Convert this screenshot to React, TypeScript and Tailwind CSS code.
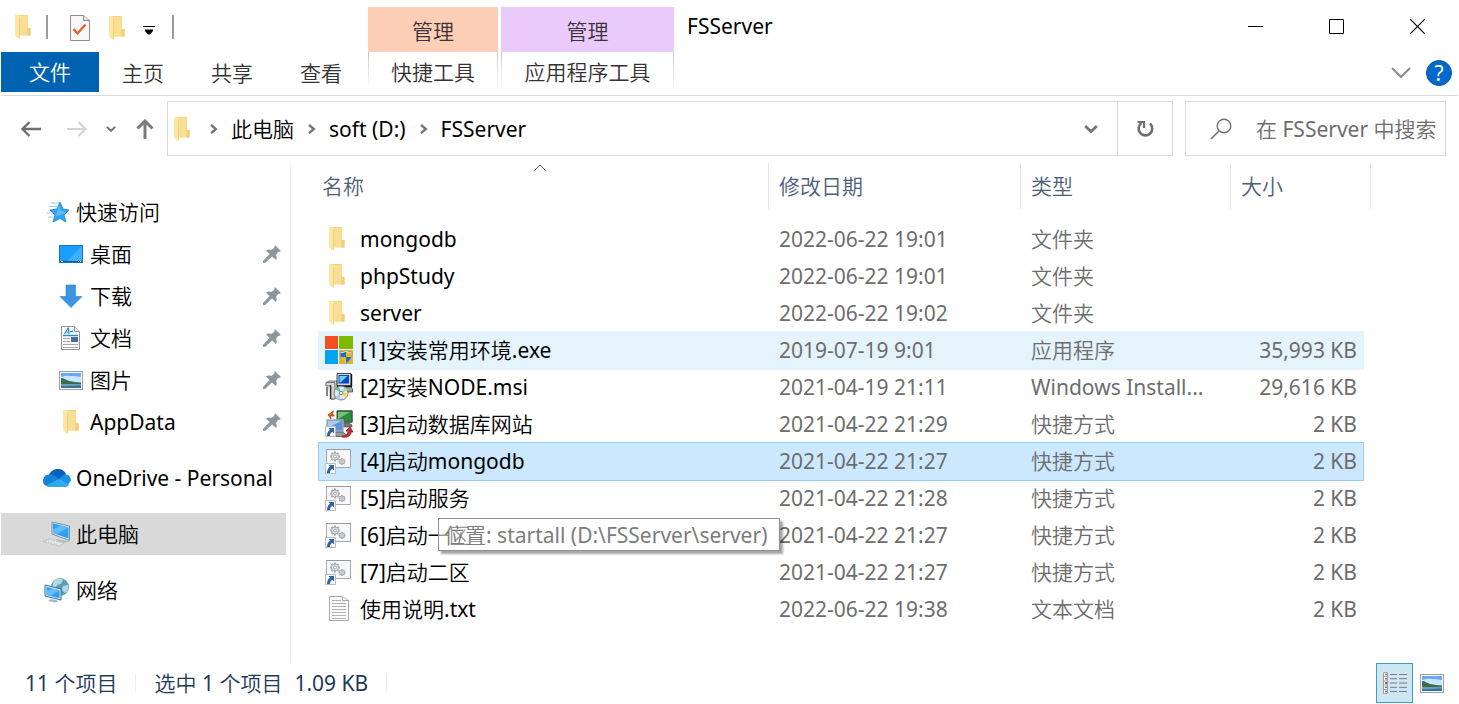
import React from "react";

type IconProps = { className?: string };

const FolderIcon = ({ className = "w-[18px] h-6" }: IconProps) => (
  <svg viewBox="0 0 18 24" className={className} aria-hidden="true">
    <path d="M1 0h13v13h2.500v7.500H6L1 18z" fill="#f6d680" />
    <path d="M5 1h8.500v19H5z" fill="#f9df94" />
    <path d="M13.500 13h3v7.500h-3z" fill="#f0cf76" />
    <path d="M1 0h3l2 2.500V23l-1 1-4-3.500z" fill="#fee7a2" />
    <path d="M5 3v20.500l1-.5V2.500z" fill="#f3d27a" />
  </svg>
);

const StarIcon = () => (
  <svg viewBox="0 0 24 22" className="w-6 h-[22px]" aria-hidden="true">
    <path
      d="m15 1 3 7 6 1-5 5 2 7-6-3.500L8 21l2-7-5-5 7-1z"
      fill="#33a3ee"
      stroke="#1b83d0"
      strokeWidth=".8"
    />
    <path d="m14 4 2 6 5 1-5 3-5 1z" fill="#5bbcf7" />
    <path d="M6 2h8M4 5.500h8M2 12h6M3 16h5" stroke="#8fcaf3" strokeWidth="1" />
  </svg>
);

const DesktopIcon = () => (
  <svg viewBox="0 0 24 18" className="w-6 h-[18px]" aria-hidden="true">
    <rect x=".5" y=".5" width="23" height="17" fill="#1a9dfb" stroke="#1478bd" />
    <path d="M23 1v15H8z" fill="#3cb0fd" />
    <path d="M1 16.500h22" stroke="#0c5c99" />
    <path d="M2 16.500h2M19 16.500h1M21 16.500h1" stroke="#fff" />
  </svg>
);

const DownloadIcon = () => (
  <svg viewBox="0 0 24 24" className="w-6 h-6" aria-hidden="true">
    <path d="M7 1h9.500v11.500H23L12 23.500 1 12.500h6z" fill="#3c96e4" stroke="#2a7fd0" strokeWidth=".6" />
  </svg>
);

const DocumentIcon = () => (
  <svg viewBox="0 0 24 26" className="w-6 h-[26px]" aria-hidden="true">
    <path d="M2.500 1.500h13l5 5v18h-18z" fill="#fff" stroke="#949494" />
    <path d="M15.500 1.500v5h5" fill="#e4e4e4" stroke="#949494" />
    <path d="M5.500 9 9 3h.5l.5 6M7 7h3" stroke="#3187cf" strokeWidth="1.2" fill="none" />
    <path d="M11 6.500h3M4 10.500h15" stroke="#3187cf" strokeWidth="1.3" />
    <path d="M4 13.500h7M4 16.500h7M4 19.500h15M4 22.500h15" stroke="#aaa" />
    <path d="M12 12h7v5h-7z" fill="#3f6d9c" />
  </svg>
);

const PictureIcon = () => (
  <svg viewBox="0 0 24 19" className="w-6 h-[19px]" aria-hidden="true">
    <rect x=".5" y=".5" width="23" height="18" fill="#fff" stroke="#9b9fb0" />
    <path d="M2 2h20v15H2z" fill="#6aa8ef" />
    <path d="M2 6c5-2 9-1 12-1s5 1 8 1v5H2z" fill="#cbe5fa" />
    <path d="M2 7c3 0 5 2 8 3 4 1 8 1 12 2v1H2z" fill="#3d6c4d" />
    <path d="M2 13h20v4H2z" fill="#34709c" />
    <path d="M2 13c5 0 12 0 20 0v1.500C12 14 8 16 2 15z" fill="#6f9fb5" />
  </svg>
);

const PinIcon = () => (
  <svg viewBox="0 0 18 18" className="w-[18px] h-[18px]" aria-hidden="true">
    <path
      d="M12 0 18 6l-2 1-1 0-2 3c1 2 1 3 0 5l-4-3.500L2 18H0v-2l6.500-7L3 5.500c2-1.200 3.500-1 5-.5l3-2z"
      fill="#8c989e"
    />
  </svg>
);

const CloudIcon = () => (
  <svg viewBox="0 0 28 18" className="w-7 h-[18px]" aria-hidden="true">
    <path d="M6 6C8 1 12 0 15 0c4 0 7 2 8 5.500L15 12z" fill="#0a63b8" />
    <path d="M0 12c0-4 3-7 7-6.500 2 0 4 .500 5 1.500l5 3-13 7C2 16.500 0 15 0 12z" fill="#1581d8" />
    <path d="m16 10 4-3.500c1-1 2-1 3-1 3 0 5 3 5 6l-3 4z" fill="#1c92e4" />
    <path d="M3 16.500 16 10l10 5.500C25 17.500 23 18 22 18H7c-2 0-3-.5-4-1.500z" fill="#2fa8ec" />
  </svg>
);

const ComputerIcon = () => (
  <svg viewBox="0 0 28 26" className="w-7 h-[26px]" aria-hidden="true">
    <path d="m9 1 17.500 4v14.500L9 13z" fill="#cfe6f4" stroke="#55829d" strokeWidth=".8" />
    <path d="m10 2.500 15.500 3.700v11.300L10 12z" fill="#2f9ff3" />
    <path d="m25.500 6.500-12 6.800-3.500-1.300V8l8-3.600z" fill="#62bbf9" />
    <path d="m13 18 9 1.500 4 1-4 1.500-8-2z" fill="#b4bec4" />
    <path d="m0 20.500 6-2.500 15 4.500-5 2.500z" fill="#f2f4f5" stroke="#a4afb5" strokeWidth=".8" strokeDasharray="2 .7" />
    <path d="m4 19 14 4.500M2 20l14 4" stroke="#b3bcc1" strokeWidth=".7" strokeDasharray="2 1" />
  </svg>
);

const NetworkIcon = () => (
  <svg viewBox="0 0 28 26" className="w-7 h-[26px]" aria-hidden="true">
    <circle cx="17" cy="10" r="9" fill="#5a9fb8" />
    <path d="M11 4c3-3 7-3 9-1l-2 4-4 1-2 4-3-2zM20 9l5-1c1 4-1 7-3 8l-3-3z" fill="#b5d8e0" />
    <path d="m2 8 16 4v11L2 19z" fill="#d3ecfa" stroke="#3d7394" />
    <path d="m3.500 10 13 3.200v8L3.500 18z" fill="#2c9ef2" />
    <path d="m16.500 13.500-9 5.500-4-1v-4l6-2.500z" fill="#65bcf9" />
    <path d="m8 22 5 1 3 1-4 1.500-7-1.500z" fill="#a9b8c0" />
  </svg>
);

const SetupIcon = () => (
  <svg viewBox="0 0 28 28" className="w-7 h-7" aria-hidden="true">
    <path d="M0 0h13v13H0z" fill="#f25022" />
    <path d="M14 0h14v13H14z" fill="#7fba00" />
    <path d="M0 14h13v14H0z" fill="#00a4ef" />
    <path d="M14 14h14v14H14z" fill="#eab02b" />
    <path d="M21 14c2 1.500 4 2 6 2 0 6-2 9-6 12-4-3-6-6-6-12 2 0 4-.5 6-2z" fill="#e9e9e9" stroke="#777" strokeWidth=".6" />
    <path d="M21 15.500V21h-5c-.4-1-.5-2-.5-4 2 0 4-.5 5.500-1.500zM21 21h5c-1 3-3 5-5 6z" fill="#1b6fc2" />
    <path d="M21 15.500V21h5c.4-1 .5-2 .5-4-2 0-4-.5-5.500-1.500zM21 21h-5c1 3 3 5 5 6z" fill="#f2b620" />
  </svg>
);

const InstallerIcon = () => (
  <svg viewBox="0 0 28 28" className="w-7 h-7" aria-hidden="true">
    <path d="M1 9.500 4 8h8v16l-3 2H6" fill="#e4e4e4" stroke="#555" strokeWidth=".8" />
    <path d="M1 9.500h9V26H6V13H1z" fill="#d5d5d5" stroke="#555" strokeWidth=".8" />
    <path d="M2 14v9M5.500 12v14" stroke="#333" strokeWidth="1.2" />
    <path d="M12 .5h14v12H12z" fill="#cfd3da" stroke="#222" strokeWidth=".8" />
    <path d="M13.500 2h10.500v8.500H13.500z" fill="#0c46c7" />
    <path d="M14.500 3h8l-7 6.500h-1z" fill="#62d6fa" />
    <path d="M26.500 1v12.500H12" stroke="#111" strokeWidth="1.4" fill="none" />
    <path d="M15 14h11l1.500 2v3h-6z" fill="#a4a4a4" stroke="#333" strokeWidth=".7" />
    <circle cx="16" cy="20" r="7" fill="#e1e8e9" stroke="#666" strokeWidth=".8" />
    <path d="m16 20-6-4 4-2.500z" fill="#57c6b0" />
    <path d="m16 20 7 0-2 5z" fill="#f2d44e" />
    <path d="m16 20-2 7-4-3z" fill="#9fd0ec" />
    <path d="m16 20 4-6 3 3z" fill="#9fd6b0" />
    <circle cx="16" cy="20" r="1.700" fill="#fff" stroke="#555" strokeWidth=".7" />
  </svg>
);

// Small arrow in the corner of every shortcut icon
const ShortcutArrow = () => (
  <g>
    <path d="M.5 16.500h10v10H.5z" fill="#fff" stroke="#b5bbc2" />
    <path d="M3.500 18H9v5.500l-1.800-1.700C5.500 23 5 24 5 26H2c0-3 1-5 3-6.300z" fill="#2f60a8" />
  </g>
);

const DatabaseSiteIcon = () => (
  <svg viewBox="0 0 28 28" className="w-7 h-7" aria-hidden="true">
    <path d="M12 .8h15.200v11.400H12z" fill="#2f8a3d" stroke="#333" strokeWidth=".9" />
    <path d="M13 2h12L13 9z" fill="#74c47a" />
    <path d="M18 13h6l3 2v2h-9z" fill="#777" stroke="#444" strokeWidth=".6" />
    <path d="M8.500 1 3 5l3 4-.5-3h4l-2-2z" fill="#e2621b" stroke="#99400f" strokeWidth=".7" />
    <path d="M2 10h16v11H2z" fill="#5d95dc" stroke="#a5abb2" strokeWidth="1.4" />
    <path d="M3 11h13L3 18z" fill="#a9cbf4" />
    <path d="M10 22h8l3 2.500v2H11z" fill="#999" stroke="#555" strokeWidth=".8" />
    <path d="M17 26c4 0 6-2 6-5h-2l4-4 3 5h-2c0 4-4 6-9 5z" fill="#c62d35" stroke="#7b171d" strokeWidth=".7" />
    <ShortcutArrow />
  </svg>
);

const GEAR = "M0-5v10M-5 0H5M-3.500-3.500l7 7M3.500-3.500l-7 7";

const BatchIcon = () => (
  <svg viewBox="0 0 28 28" className="w-7 h-7" aria-hidden="true">
    <path d="M1.500 2.500h24v18h-24z" fill="#f8f8f9" stroke="#a3a9ae" />
    <path d="M1 2.500h25" stroke="#929ca3" />
    <g transform="translate(10 9.500)">
      <path d={GEAR} stroke="#a4aaae" strokeWidth="2" />
      <circle r="3.500" fill="#e8eaeb" stroke="#a4aaae" />
      <circle r="1.500" fill="#fff" stroke="#a4aaae" />
    </g>
    <g transform="translate(17 14.500) scale(.7)">
      <path d={GEAR} stroke="#9fa5a9" strokeWidth="2" />
      <circle r="3.500" fill="#e5e7e8" stroke="#92989c" />
      <circle r="1.300" fill="#fff" stroke="#92989c" />
    </g>
    <ShortcutArrow />
  </svg>
);

const TextFileIcon = () => (
  <svg viewBox="0 0 20 26" className="w-5 h-[26px]" aria-hidden="true">
    <path d="M.5.5h13l6 4v20H.5z" fill="#fafafa" stroke="#a8a8a8" />
    <path d="M13.500.5v4h6" fill="#eee" stroke="#a8a8a8" />
    <path
      d="M3 4.500h9M3 7.500h14M3 10.500h14M3 13.500h14M3 16.500h14M3 19.500h14M3 22.500h14"
      stroke="#b2b2b2"
    />
  </svg>
);

const Crumb = () => (
  <svg viewBox="0 0 8 10" className="w-2 h-2.5 shrink-0" aria-hidden="true">
    <path d="m1 .8 4.800 4.200L1 9.200" fill="none" stroke="#767676" strokeWidth="2.400" />
  </svg>
);

const ChevronDown = ({ className }: IconProps) => (
  <svg viewBox="0 0 14 10" className={className} aria-hidden="true">
    <path d="m1.200 2 5.800 5.500L12.800 2" fill="none" stroke="#757575" strokeWidth="2.800" />
  </svg>
);

const quickLinks = [
  { label: "桌面", icon: <DesktopIcon /> },
  { label: "下载", icon: <DownloadIcon /> },
  { label: "文档", icon: <DocumentIcon /> },
  { label: "图片", icon: <PictureIcon /> },
  { label: "AppData", icon: <FolderIcon /> },
];

const files = [
  { name: "mongodb", date: "2022-06-22 19:01", type: "文件夹", size: "", icon: <FolderIcon /> },
  { name: "phpStudy", date: "2022-06-22 19:01", type: "文件夹", size: "", icon: <FolderIcon /> },
  { name: "server", date: "2022-06-22 19:02", type: "文件夹", size: "", icon: <FolderIcon /> },
  { name: "[1]安装常用环境.exe", date: "2019-07-19 9:01", type: "应用程序", size: "35,993 KB", icon: <SetupIcon />, state: "hover" },
  { name: "[2]安装NODE.msi", date: "2021-04-19 21:11", type: "Windows Install...", size: "29,616 KB", icon: <InstallerIcon /> },
  { name: "[3]启动数据库网站", date: "2021-04-22 21:29", type: "快捷方式", size: "2 KB", icon: <DatabaseSiteIcon /> },
  { name: "[4]启动mongodb", date: "2021-04-22 21:27", type: "快捷方式", size: "2 KB", icon: <BatchIcon />, state: "selected" },
  { name: "[5]启动服务", date: "2021-04-22 21:28", type: "快捷方式", size: "2 KB", icon: <BatchIcon /> },
  { name: "[6]启动一区", date: "2021-04-22 21:27", type: "快捷方式", size: "2 KB", icon: <BatchIcon />, tip: "位置: startall (D:\\FSServer\\server)" },
  { name: "[7]启动二区", date: "2021-04-22 21:27", type: "快捷方式", size: "2 KB", icon: <BatchIcon /> },
  { name: "使用说明.txt", date: "2022-06-22 19:38", type: "文本文档", size: "2 KB", icon: <TextFileIcon /> },
];

const rowState: Record<string, string> = {
  hover: "bg-[#e5f3fd] outline outline-[#e5f3fd]",
  selected: "bg-[#cce8ff] outline outline-[#99cdf3]",
};

const NavItem = ({ label, icon, active }: any) => (
  <a
    href="#"
    className={`flex h-[42px] items-center gap-[5px] pl-[42px] ${active ? "bg-[#d9d9d9]" : ""}`}
  >
    <span className="flex w-7 justify-center">{icon}</span>
    <span className="whitespace-nowrap">{label}</span>
  </a>
);

const TitleBar = () => (
  <div className="flex h-[52px]">
    <div className="flex w-[367px] items-center pl-[13px] pt-0.5">
      <button aria-label="窗口菜单"><FolderIcon /></button>
      <span className="ml-3.5 h-6 w-0.5 bg-[#9b9b9b]" />
      <button aria-label="属性" className="ml-[22px] mt-0.5">
        <svg viewBox="0 0 20 26" className="w-5 h-[26px]" aria-hidden="true">
          <path d="M.5.5h13l6 5v20H.5z" fill="#f8f8fa" stroke="#8d8d8d" />
          <path d="M13.500.5v5h6" fill="#e2e2e2" stroke="#8d8d8d" />
          <path d="m3.500 14 4 4.500 8-9" fill="none" stroke="#e8622b" strokeWidth="2.400" />
        </svg>
      </button>
      <button aria-label="新建文件夹" className="ml-[18px] mt-0.5"><FolderIcon /></button>
      <button aria-label="自定义快速访问工具栏" className="ml-[17px] mt-1.5">
        <svg viewBox="0 0 12 9" className="w-3 h-[9px]" aria-hidden="true">
          <path d="M0 .5h12" stroke="#000" />
          <path d="M2 3.500h8v1.500L7 8.500H5L2 5z" />
        </svg>
      </button>
      <span className="ml-[17px] h-6 w-0.5 bg-[#9b9b9b]" />
    </div>
    <div className="mt-[7px] flex gap-[3px] text-[#3c3237]">
      <div className="flex w-[130px] items-center justify-center bg-[#fdceb6] pt-0.5">管理</div>
      <div className="flex w-[173px] items-center justify-center bg-[#e9cafb] pt-0.5">管理</div>
    </div>
    <h1 className="flex-1 pl-[13px] pt-3">FSServer</h1>
    <div className="flex items-center gap-[66px] pr-[33px]">
      <button aria-label="最小化">
        <svg viewBox="0 0 15 15" className="w-[15px] h-[15px]"><path d="M0 7.500h15" stroke="#000" /></svg>
      </button>
      <button aria-label="最大化">
        <svg viewBox="0 0 15 15" className="w-[15px] h-[15px]"><path d="M.5.5h14v14H.5z" fill="none" stroke="#000" /></svg>
      </button>
      <button aria-label="关闭">
        <svg viewBox="0 0 15 15" className="w-[15px] h-[15px]"><path d="m0 0 15 15M15 0 0 15" stroke="#000" strokeWidth="1.200" /></svg>
      </button>
    </div>
  </div>
);

const toolTab =
  "h-9 border-x [border-image:linear-gradient(#c4c4c4,#ffffff)_1] pt-1";

const Ribbon = () => (
  <div className="flex h-11 border-b border-[#dadbdc] text-[#333]">
    <button className="h-10 w-[98px] bg-[#0063b1] text-white">文件</button>
    <div className="flex h-10 w-[269px] items-center gap-[47px] pl-[23px] pt-0.5">
      <button>主页</button>
      <button>共享</button>
      <button>查看</button>
    </div>
    <div className="flex gap-[3px]">
      <button className={`w-[130px] ${toolTab}`}>快捷工具</button>
      <button className={`w-[173px] ${toolTab}`}>应用程序工具</button>
    </div>
    <div className="ml-auto flex h-[42px] items-center gap-[15px] pr-1.5">
      <button aria-label="展开功能区">
        <svg viewBox="0 0 20 12" className="w-5 h-3"><path d="m1 1 9 9 9-9" fill="none" stroke="#8a8a8a" strokeWidth="2" /></svg>
      </button>
      <button
        aria-label="帮助"
        className="flex h-[26px] w-[26px] items-center justify-center rounded-full border border-[#0a56a5] bg-[#0069cb] text-white"
      >
        ?
      </button>
    </div>
  </div>
);

const AddressBar = () => (
  <div className="flex h-[60px] pt-[5px] pr-3">
    <div className="flex w-[166px] items-center pl-5">
      <button aria-label="后退">
        <svg viewBox="0 0 20 16" className="w-5 h-4"><path d="M20 8H2M8.500 1 1.500 8l7 7" fill="none" stroke="#6f6f6f" strokeWidth="2.300" /></svg>
      </button>
      <button aria-label="前进" className="ml-[26px]">
        <svg viewBox="0 0 20 16" className="w-5 h-4"><path d="M0 8h18M11.500 1l7 7-7 7" fill="none" stroke="#d4d4d4" strokeWidth="2.200" /></svg>
      </button>
      <button aria-label="最近浏览的位置" className="ml-[19px]"><ChevronDown className="w-2.5 h-2" /></button>
      <button aria-label="向上" className="ml-5">
        <svg viewBox="0 0 18 20" className="w-[18px] h-5"><path d="M9 20V2M1.500 9.500 9 2l7.500 7.500" fill="none" stroke="#7b7b7b" strokeWidth="3" /></svg>
      </button>
    </div>
    <div className="flex flex-1 border border-[#d9d9d9]">
      <nav className="flex flex-1 items-center pl-[5px]" aria-label="地址">
        <FolderIcon />
        <span className="w-[19px]" />
        <Crumb />
        <button className="ml-[13px] mr-3.5">此电脑</button>
        <Crumb />
        <button className="ml-[13px] mr-3.5">soft (D:)</button>
        <Crumb />
        <button className="ml-[13px] mr-3.5">FSServer</button>
      </nav>
      <button aria-label="以前的位置" className="px-[19px]"><ChevronDown className="w-3.5 h-2.5" /></button>
      <button aria-label="刷新" className="flex w-[55px] items-center justify-center border-l border-[#d9d9d9]">
        <svg viewBox="0 0 18 18" className="w-[18px] h-[18px]">
          <path d="M14 3.500a6.800 6.800 0 1 1-8.500-.5" fill="none" stroke="#707070" strokeWidth="2.600" />
          <path d="M1.500 2H8v6" fill="none" stroke="#707070" strokeWidth="2.200" />
        </svg>
      </button>
    </div>
    <label className="ml-3 flex w-[261px] items-center border border-[#d9d9d9] pl-6">
      <svg viewBox="0 0 22 22" className="h-[22px] w-[22px] shrink-0" aria-hidden="true">
        <circle cx="14" cy="8" r="6.800" fill="none" stroke="#707070" strokeWidth="1.400" />
        <path d="m9 13-8 8" stroke="#707070" strokeWidth="1.600" />
      </svg>
      <input
        type="text"
        aria-label="搜索"
        placeholder="在 FSServer 中搜索"
        className="ml-6 w-full min-w-0 outline-none placeholder:text-[#6d6d6d]"
      />
    </label>
  </div>
);

const Sidebar = () => (
  <nav className="w-[290px] shrink-0 border-r border-[#f0f0f0] pr-1 pt-7" aria-label="导航窗格">
    <NavItem label="快速访问" icon={<StarIcon />} />
    {quickLinks.map((item) => (
      <a key={item.label} href="#" className="flex h-[42px] items-center pl-14 pr-[5px]">
        <span className="flex w-7 justify-center">{item.icon}</span>
        <span className="ml-[5px] flex-1">{item.label}</span>
        <PinIcon />
      </a>
    ))}
    <div className="mt-3.5 space-y-3.5">
      <NavItem label="OneDrive - Personal" icon={<CloudIcon />} />
      <NavItem label="此电脑" icon={<ComputerIcon />} active />
      <NavItem label="网络" icon={<NetworkIcon />} />
    </div>
  </nav>
);

const columns = [
  { label: "名称", pad: "pl-[3px]", grip: "right-0" },
  { label: "修改日期", pad: "pl-2.5", grip: "right-0" },
  { label: "类型", pad: "pl-2.5", grip: "right-0" },
  { label: "大小", pad: "pl-2.5", grip: "-right-2" },
];

const FileList = () => (
  <main className="flex-1 pl-7">
    <table className="w-[1044px] table-fixed">
      <colgroup>
        <col className="w-[450px]" />
        <col className="w-[252px]" />
        <col className="w-[210px]" />
        <col className="w-[132px]" />
      </colgroup>
      <thead>
        <tr className="h-[58px]">
          {columns.map((col, i) => (
            <th key={col.label} className={`relative text-left align-top font-normal text-[#4c607a] ${col.pad}`}>
              <span className="block leading-[46px]">{col.label}</span>
              <span className={`absolute top-0 h-[46px] w-px bg-[#e5e5e5] ${col.grip}`} />
              {i === 0 && (
                <svg viewBox="0 0 12 7" className="absolute left-[215px] top-px h-[7px] w-3" aria-hidden="true">
                  <path d="m.5 6.500 5.500-5.500 5.500 5.500" fill="none" stroke="#5c5c5c" />
                </svg>
              )}
            </th>
          ))}
        </tr>
      </thead>
      <tbody>
        {files.map((file) => (
          <tr key={file.name} className={`h-[37px] text-[#6d6d6d] ${file.state ? rowState[file.state] : ""}`}>
            <td className="relative pb-0.5 pl-1.5 text-black">
              <div className="flex items-center gap-[7px]">
                <span className={`flex w-7 ${file.size ? "justify-center" : "pl-[3px]"}`}>{file.icon}</span>
                <span>{file.name}</span>
              </div>
              {file.tip && (
                <div
                  role="tooltip"
                  className="absolute left-[119px] top-px z-10 flex h-[33px] items-center whitespace-nowrap border border-[#8f8f8f] bg-white/60 pl-[5px] pr-3 text-[#7c7c7c] shadow-[3px_3px_2px_rgba(0,0,0,0.35)]"
                >
                  {file.tip}
                </div>
              )}
            </td>
            <td className="pb-0.5 pl-2.5">{file.date}</td>
            <td className="pb-0.5 pl-2.5">{file.type}</td>
            <td className="pb-0.5 pr-1.5 text-right">{file.size}</td>
          </tr>
        ))}
      </tbody>
    </table>
  </main>
);

const StatusBar = () => (
  <footer className="flex h-[42px] items-center pl-6 text-[#1e395b]">
    <span>11 个项目</span>
    <span className="mx-[18px] h-[18px] w-px bg-[#eee]" />
    <span>选中 1 个项目</span>
    <span className="ml-3">1.09 KB</span>
    <span className="ml-[18px] h-[18px] w-px bg-[#eee]" />
    <div className="ml-auto flex items-center gap-[7px] pr-3.5">
      <button aria-label="详细信息" className="flex h-10 w-[37px] items-center justify-center border border-[#3c9fc7] bg-[#cde6f1]">
        <svg viewBox="0 0 24 24" className="h-6 w-6" aria-hidden="true">
          <path d="M.5 1.500h4v21h-4z" fill="#fff" stroke="#a79c92" />
          <path d="M0 5.500h5M0 10h5M0 14h5M0 18.500h5" stroke="#a79c92" />
          <path d="M2 3.500h2M2 7.700h2M2 16.300h2M2 20.500h2" stroke="#5c7a9b" strokeWidth="1.500" />
          <path d="M2 12h2" stroke="#c2452f" strokeWidth="1.800" />
          <path d="M7 3.500h7M16 3.500h8M7 7.700h7M16 7.700h8M7 12h7M16 12h8M7 16.300h7M16 16.300h8M7 20.500h7M16 20.500h8" stroke="#777d80" />
        </svg>
      </button>
      <button aria-label="大图标"><PictureIcon /></button>
    </div>
  </footer>
);

export default function App() {
  return (
    <div className='flex min-h-screen flex-col bg-white px-px font-["Noto_Sans","Noto_Sans_CJK_SC_DemiLight","Noto_Sans_CJK_SC_Light","Noto_Sans_CJK_SC",sans-serif] text-[21px] leading-7 text-black'>
      <header>
        <TitleBar />
        <Ribbon />
        <AddressBar />
      </header>
      <div className="mt-[7px] flex flex-1">
        <Sidebar />
        <FileList />
      </div>
      <StatusBar />
    </div>
  );
}
